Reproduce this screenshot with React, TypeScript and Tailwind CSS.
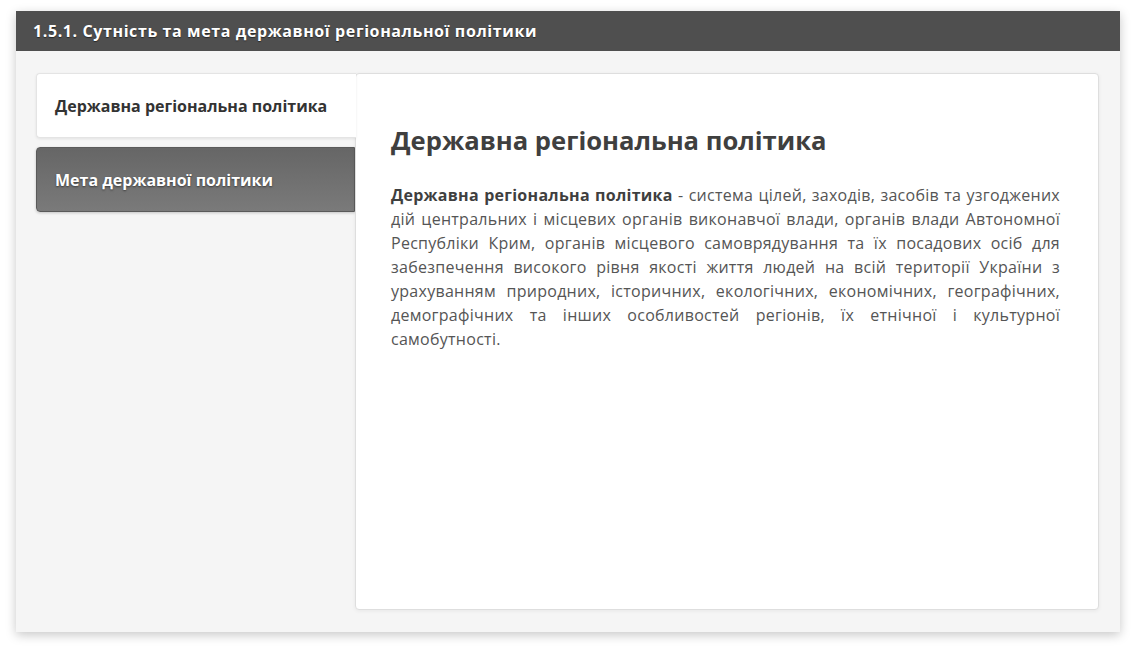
import React, { useState } from 'react'

const tabs = [
  {
    id: 0,
    title: 'Державна регіональна політика',
  },
  {
    id: 1,
    title: 'Мета державної політики',
  },
]

const App = () => {
  const [active, setActive] = useState(0)

  return (
    <div className="w-[1136px] h-[653px] bg-white pt-[11px] pl-[16px] font-['Open_Sans',sans-serif]">
      <div className="w-[1104px] h-[621px] flex flex-col bg-[#f5f5f5] shadow-[0_3px_10px_rgba(0,0,0,0.22)]">
        <div className="h-[40px] shrink-0 bg-[#4f4f4f] flex items-center pl-[17px] text-white text-[16px] tracking-[0.6px] font-bold [text-shadow:0_1px_1px_rgba(0,0,0,0.5)]">
          1.5.1. Сутність та мета державної регіональної політики
        </div>
        <div className="flex-1 flex pt-[22px] pb-[22px] pl-[20px] pr-[21px]">
          <div className="w-[319px] shrink-0 flex flex-col gap-[9px]">
            {tabs.map((tab) => (
              <button
                key={tab.id}
                onClick={() => setActive(tab.id)}
                className={
                  tab.id === active
                    ? 'h-[65px] text-left pl-[18px] text-[16px] font-bold text-[#333] bg-white rounded-l-[4px] border border-r-0 border-[#e4e4e4] relative z-10 -mr-px shadow-[0_1px_3px_rgba(0,0,0,0.08)]'
                    : 'h-[65px] text-left pl-[18px] text-[16px] font-bold text-white bg-gradient-to-b from-[#666] to-[#7a7a7a] rounded-l-[4px] border border-[#5a5a5a] [text-shadow:0_1px_2px_rgba(0,0,0,0.5)] shadow-[0_1px_3px_rgba(0,0,0,0.2)]'
                }
              >
                {tab.title}
              </button>
            ))}
          </div>
          <div className="flex-1 bg-white border border-[#dedede] rounded-[4px] pt-[49px] pl-[35px] pr-[38px] shadow-[0_1px_4px_rgba(0,0,0,0.06)]">
            <h2 className="text-[25.6px] leading-[36px] font-bold text-[#3f3f3f]">
              {tabs[active].title}
            </h2>
            {active === 0 ? (
              <p className="mt-[24px] text-[16px] tracking-[0.27px] leading-[24px] text-[#555] text-justify">
                <b className="text-[#3f3f3f]">Державна регіональна політика</b> - система цілей, заходів, засобів та узгоджених дій центральних і місцевих органів виконавчої влади, органів влади Автономної Республіки Крим, органів місцевого самоврядування та їх посадових осіб для забезпечення високого рівня якості життя людей на всій території України з урахуванням природних, історичних, екологічних, економічних, географічних, демографічних та інших особливостей регіонів, їх етнічної і культурної самобутності.
              </p>
            ) : (
              <p className="mt-[24px] text-[16px] leading-[24px] text-[#555] text-justify" />
            )}
          </div>
        </div>
      </div>
    </div>
  )
}

export default App
